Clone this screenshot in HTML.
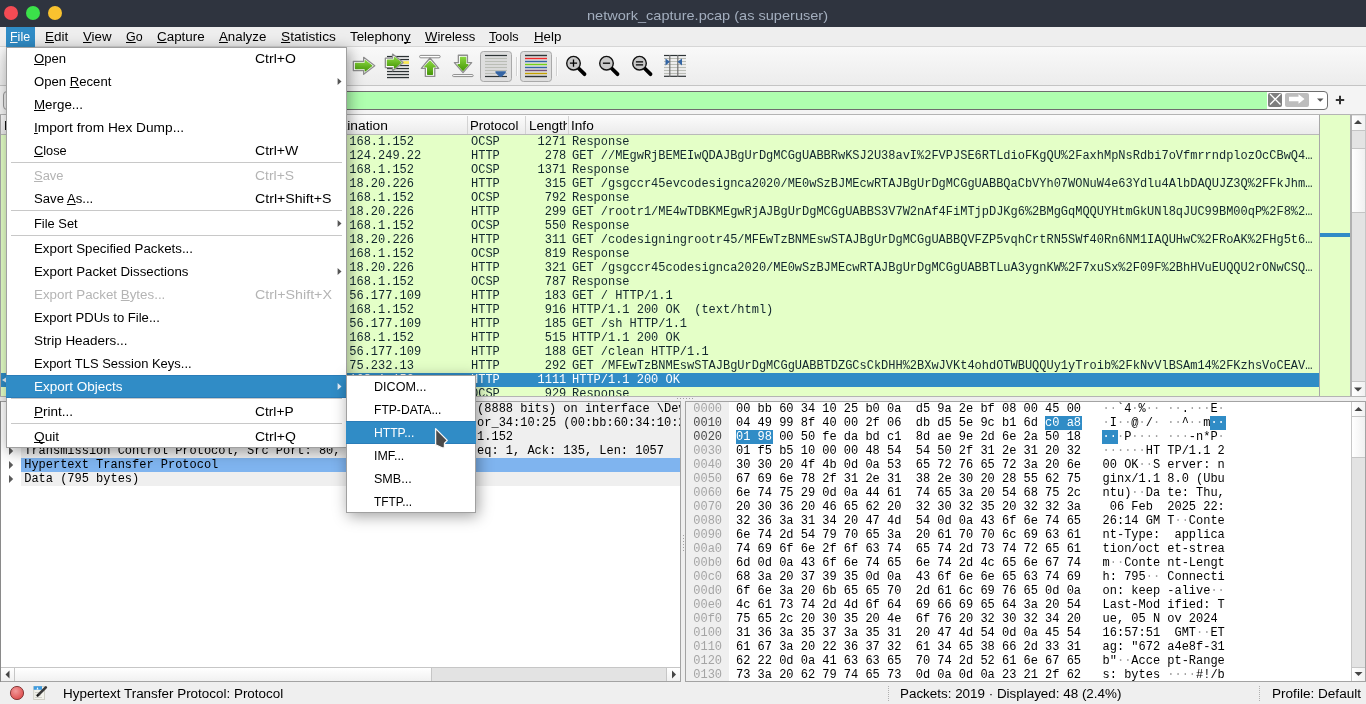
<!DOCTYPE html>
<html><head><meta charset="utf-8"><title>Wireshark</title><style>*{margin:0;padding:0}
body{width:1366px;height:704px;position:relative;overflow:hidden;background:#efefef}
div{position:absolute}
.t{font-family:"Liberation Sans",sans-serif;line-height:16px;white-space:pre;transform-origin:0 0}
.m{font-family:"Liberation Mono",monospace;font-size:12px;line-height:14px;white-space:pre;letter-spacing:-0.0125px}
u{text-decoration:underline;text-decoration-thickness:1px;text-underline-offset:1px;text-decoration-skip-ink:none}
</style></head><body><div id="root" style="left:0;top:0;width:1366px;height:704px;overflow:hidden;background:#efefef;will-change:transform">
<div style="left:0px;top:0px;width:1366px;height:27px;background:#2f343f"></div>
<div style="left:4px;top:6px;width:14px;height:14px;border-radius:50%;background:#f44b54"></div>
<div style="left:26px;top:6px;width:14px;height:14px;border-radius:50%;background:#3be14a"></div>
<div style="left:48px;top:6px;width:14px;height:14px;border-radius:50%;background:#f9c22f"></div>
<div class="t" style="left:586.5px;top:8px;font-size:13.5px;color:#a3aebe;transform:scaleX(1.0780);">network_capture.pcap (as superuser)</div>
<div style="left:0px;top:27px;width:1366px;height:19px;background:#eeeeee"></div>
<div style="left:0px;top:46px;width:1366px;height:1px;background:#d6d6d6"></div>
<div style="left:6px;top:27px;width:29px;height:20px;background:#308cc6"></div>
<div class="t" style="left:10px;top:29px;font-size:12.5px;color:#ffffff;transform:scaleX(0.9971);"><u>F</u>ile</div>
<div class="t" style="left:44.5px;top:29px;font-size:12.5px;color:#000000;transform:scaleX(1.0789);"><u>E</u>dit</div>
<div class="t" style="left:82.5px;top:29px;font-size:12.5px;color:#000000;transform:scaleX(1.0599);"><u>V</u>iew</div>
<div class="t" style="left:125.5px;top:29px;font-size:12.5px;color:#000000;transform:scaleX(0.9980);"><u>G</u>o</div>
<div class="t" style="left:156.5px;top:29px;font-size:12.5px;color:#000000;transform:scaleX(1.0730);"><u>C</u>apture</div>
<div class="t" style="left:218.5px;top:29px;font-size:12.5px;color:#000000;transform:scaleX(1.0633);"><u>A</u>nalyze</div>
<div class="t" style="left:280.5px;top:29px;font-size:12.5px;color:#000000;transform:scaleX(1.0968);"><u>S</u>tatistics</div>
<div class="t" style="left:350px;top:29px;font-size:12.5px;color:#000000;transform:scaleX(1.0645);">Telephon<u>y</u></div>
<div class="t" style="left:424.5px;top:29px;font-size:12.5px;color:#000000;transform:scaleX(1.0478);"><u>W</u>ireless</div>
<div class="t" style="left:489px;top:29px;font-size:12.5px;color:#000000;transform:scaleX(1.0131);"><u>T</u>ools</div>
<div class="t" style="left:533.5px;top:29px;font-size:12.5px;color:#000000;transform:scaleX(1.0642);"><u>H</u>elp</div>
<div style="left:0px;top:47px;width:1366px;height:38px;background:linear-gradient(#f9f9f9,#ececec)"></div>
<div style="left:0px;top:85px;width:1366px;height:1px;background:#c4c4c4"></div>
<svg style="position:absolute;left:0;top:0" width="1366" height="90" viewBox="0 0 1366 90"><defs><linearGradient id="gg" x1="0" y1="0" x2="0" y2="1"><stop offset="0" stop-color="#86d43c"/><stop offset="1" stop-color="#4a9a0c"/></linearGradient><linearGradient id="mg" x1="0" y1="0" x2="0" y2="1"><stop offset="0" stop-color="#e6e6e6"/><stop offset="1" stop-color="#a8a8a8"/></linearGradient></defs><polygon points="353.35,61.35 363.65,61.35 363.65,57.3 374.75,65.8 363.65,74.3 363.65,70.55 353.35,70.55" fill="#fdfdfd" stroke="#8e8e8e" stroke-width="1.3" stroke-linejoin="round"/><polygon points="355.6,63.4 365.3,63.4 365.3,60.82 371.69,65.8 365.3,70.78 365.3,68.5 355.6,68.5" fill="url(#gg)" stroke="url(#gg)" stroke-width="1.4" stroke-linejoin="round"/><rect x="387" y="55.9" width="22" height="1.3" fill="#2e3436"/><rect x="387" y="58.9" width="22" height="1.3" fill="#2e3436"/><rect x="387" y="61.9" width="22" height="1.3" fill="#2e3436"/><rect x="387" y="64.9" width="22" height="1.3" fill="#2e3436"/><rect x="387" y="67.9" width="22" height="1.3" fill="#2e3436"/><rect x="387" y="70.9" width="22" height="1.3" fill="#2e3436"/><rect x="387" y="73.9" width="22" height="1.3" fill="#2e3436"/><rect x="387" y="76.9" width="22" height="1.3" fill="#2e3436"/><rect x="403" y="61.2" width="6" height="2.6" fill="#fce94f"/><polygon points="385.35,58.15 392.55,58.15 392.55,54.11 403.06,62.5 392.55,70.69 392.55,67.55 385.35,67.55" fill="#fdfdfd" stroke="#8e8e8e" stroke-width="1.3" stroke-linejoin="round"/><polygon points="387.5,60.3 394.5,60.3 394.5,57.62 400.8,62.51 394.5,67.74 394.5,65.4 387.5,65.4" fill="url(#gg)" stroke="url(#gg)" stroke-width="1.4" stroke-linejoin="round"/><rect x="419.6" y="55.4" width="20.6" height="2.4" rx="1.2" fill="#fff" stroke="#8a8a8a" stroke-width="1"/><polygon points="430.0,58.03 438.68,68.35 434.75,68.35 434.75,76.45 425.35,76.45 425.35,68.35 421.32,68.35" fill="#fdfdfd" stroke="#8e8e8e" stroke-width="1.3" stroke-linejoin="round"/><polygon points="430.0,61.33 435.24,66.9 432.4,66.9 432.4,74.3 427.7,74.3 427.7,66.9 424.84,66.9" fill="url(#gg)" stroke="url(#gg)" stroke-width="1.4" stroke-linejoin="round"/><polygon points="458.35,55.25 467.45,55.25 467.45,62.65 471.67,62.65 463.0,72.67 454.33,62.65 458.35,62.65" fill="#fdfdfd" stroke="#8e8e8e" stroke-width="1.3" stroke-linejoin="round"/><polygon points="460.6,57.5 465.6,57.5 465.6,64.8 467.89,64.8 463.0,70.34 458.11,64.8 460.6,64.8" fill="url(#gg)" stroke="url(#gg)" stroke-width="1.4" stroke-linejoin="round"/><rect x="452.6" y="74.6" width="20.6" height="2.0" rx="1.0" fill="#fff" stroke="#8a8a8a" stroke-width="1"/><rect x="480.5" y="51.5" width="31" height="30" rx="3" fill="#dedede" stroke="#a9a9a9" stroke-width="1"/><rect x="485" y="54.9" width="22" height="1.2" fill="#2e3436"/><rect x="485" y="57.9" width="22" height="1.2" fill="#babdb6"/><rect x="485" y="60.9" width="22" height="1.2" fill="#babdb6"/><rect x="485" y="63.9" width="22" height="1.2" fill="#babdb6"/><rect x="485" y="66.9" width="22" height="1.2" fill="#babdb6"/><rect x="485" y="69.9" width="22" height="1.2" fill="#babdb6"/><rect x="485" y="72.9" width="22" height="1.2" fill="#babdb6"/><rect x="485" y="75.9" width="22" height="1.2" fill="#2e3436"/><path d="M495.5,71.2 L505.8,71.2 Q506.5,72 505,73.5 L501.8,76.8 L499.5,76.8 L496.2,73.5 Q494.8,72 495.5,71.2 Z" fill="#3465a4"/><rect x="516" y="57" width="1" height="19" fill="#d2d2d2"/><rect x="517" y="57" width="1" height="19" fill="#fbfbfb"/><rect x="520.5" y="51.5" width="31" height="30" rx="3" fill="#dedede" stroke="#a9a9a9" stroke-width="1"/><rect x="525" y="54.8" width="22" height="1.4" fill="#2e3436"/><rect x="525" y="57.8" width="22" height="1.4" fill="#ef2929"/><rect x="525" y="60.8" width="22" height="1.4" fill="#3465a4"/><rect x="525" y="63.8" width="22" height="1.4" fill="#73d216"/><rect x="525" y="66.8" width="22" height="1.4" fill="#3465a4"/><rect x="525" y="69.8" width="22" height="1.4" fill="#75507b"/><rect x="525" y="72.8" width="22" height="1.4" fill="#c4a000"/><rect x="525" y="75.8" width="22" height="1.4" fill="#2e3436"/><rect x="556" y="57" width="1" height="19" fill="#d2d2d2"/><rect x="557" y="57" width="1" height="19" fill="#fbfbfb"/><line x1="578.3" y1="68.0" x2="584.5" y2="74.2" stroke="#000" stroke-width="3.8" stroke-linecap="round"/><circle cx="573.5" cy="63.2" r="6.8" fill="#c8c8c8" stroke="#111" stroke-width="1.4"/><path d="M569.9,63.2 H577.1 M573.5,59.6 V66.8" stroke="#000" stroke-width="1.3"/><line x1="611.3" y1="68.0" x2="617.5" y2="74.2" stroke="#000" stroke-width="3.8" stroke-linecap="round"/><circle cx="606.5" cy="63.2" r="6.8" fill="#c8c8c8" stroke="#111" stroke-width="1.4"/><path d="M602.9,63.2 H610.1" stroke="#000" stroke-width="1.3"/><line x1="644.3" y1="68.0" x2="650.5" y2="74.2" stroke="#000" stroke-width="3.8" stroke-linecap="round"/><circle cx="639.5" cy="63.2" r="6.8" fill="#c8c8c8" stroke="#111" stroke-width="1.4"/><path d="M635.9,61.900000000000006 H643.1 M635.9,64.8 H643.1" stroke="#000" stroke-width="1.3"/><rect x="664" y="54.9" width="22" height="1.2" fill="#2e3436"/><rect x="664" y="57.9" width="22" height="1.2" fill="#babdb6"/><rect x="664" y="60.9" width="22" height="1.2" fill="#babdb6"/><rect x="664" y="63.9" width="22" height="1.2" fill="#babdb6"/><rect x="664" y="66.9" width="22" height="1.2" fill="#babdb6"/><rect x="664" y="69.9" width="22" height="1.2" fill="#babdb6"/><rect x="664" y="72.9" width="22" height="1.2" fill="#babdb6"/><rect x="664" y="75.7" width="22" height="1.2" fill="#2e3436"/><rect x="669.2" y="55" width="1.2" height="22" fill="#6f6f6f"/><rect x="677.2" y="55" width="1.2" height="22" fill="#6f6f6f"/><path d="M665.5,58.5 L670,61.8 L665.5,65.5 Z" fill="#3465a4"/><path d="M682,58.5 L677.5,61.8 L682,65.5 Z" fill="#3465a4"/></svg>
<div style="left:0px;top:86px;width:1366px;height:28px;background:#f4f4f4"></div>
<div style="left:3px;top:91px;width:20px;height:17px;border:1px solid #9a9a9a;border-radius:4px;background:#f0f0f0"></div>
<div style="left:40px;top:91px;width:1286px;height:17px;border:1px solid #6e6e6e;border-radius:4px;background:#fff;overflow:hidden"><div style="left:0;top:0;width:1226px;height:17px;background:#afffaf"></div><div style="left:1227px;top:1px;width:14px;height:14px;border-radius:2px;background:#7e7e7e"></div><div style="left:1244px;top:1px;width:24px;height:14px;border-radius:2px;background:#bdbdbd"></div></div>
<svg style="position:absolute;left:0;top:0" width="1366" height="114" viewBox="0 0 1366 114"><path d="M1270,94 L1280.5,104.5 M1280.5,94 L1270,104.5" stroke="#fff" stroke-width="1.3"/><path d="M1289,96.8 H1298.5 V94.2 L1304.5,99 L1298.5,103.8 V101.2 H1289 Z" fill="#fff"/><path d="M1317,98.5 H1323.5 L1320.25,101.8 Z" fill="#555"/><path d="M1335.8,100 H1344.2 M1340,95.8 V104.2" stroke="#333" stroke-width="2"/></svg>
<div style="left:0px;top:114px;width:1366px;height:1px;background:#b4b4b4"></div>
<div style="left:0px;top:115px;width:1319px;height:19px;background:linear-gradient(#fcfcfc,#ebebeb)"></div>
<div style="left:0px;top:134px;width:1319px;height:1px;background:#b9b9b9"></div>
<div style="left:60px;top:116px;width:1px;height:18px;background:#d3d3d3"></div>
<div style="left:170px;top:116px;width:1px;height:18px;background:#d3d3d3"></div>
<div style="left:320px;top:116px;width:1px;height:18px;background:#d3d3d3"></div>
<div style="left:467px;top:116px;width:1px;height:18px;background:#d3d3d3"></div>
<div style="left:525px;top:116px;width:1px;height:18px;background:#d3d3d3"></div>
<div style="left:568px;top:116px;width:1px;height:18px;background:#d3d3d3"></div>
<div class="t" style="left:3.5px;top:118px;font-size:12.5px;color:#000;transform:scaleX(1.0242);">No.</div>
<div class="t" style="left:318.5px;top:118px;font-size:12.5px;color:#000;transform:scaleX(1.1012);">Destination</div>
<div class="t" style="left:470.3px;top:118px;font-size:12.5px;color:#000;transform:scaleX(1.0546);">Protocol</div>
<div style="left:526px;top:115px;width:41px;height:19px;overflow:hidden">
<div class="t" style="left:3px;top:3px;font-size:12.5px;color:#000;transform:scaleX(1.0827);">Length</div>
</div>
<div class="t" style="left:570.6px;top:118px;font-size:12.5px;color:#000;transform:scaleX(1.0893);">Info</div>
<div style="left:0;top:135px;width:1319px;height:261px;overflow:hidden;background:#e4ffc7">
<div class="m" style="left:349.3px;top:0px;color:#12272e;">168.1.152</div>
<div class="m" style="left:471px;top:0px;color:#12272e;">OCSP</div>
<div class="m" style="left:537.5px;top:0px;color:#12272e;">1271</div>
<div class="m" style="left:572px;top:0px;color:#12272e;">Response</div>
<div class="m" style="left:349.3px;top:14px;color:#12272e;">124.249.22</div>
<div class="m" style="left:471px;top:14px;color:#12272e;">HTTP</div>
<div class="m" style="left:544.6999999999999px;top:14px;color:#12272e;">278</div>
<div class="m" style="left:572px;top:14px;color:#12272e;">GET //MEgwRjBEMEIwQDAJBgUrDgMCGgUABBRwKSJ2U38avI%2FVPJSE6RTLdioFKgQU%2FaxhMpNsRdbi7oVfmrrndplozOcCBwQ4…</div>
<div class="m" style="left:349.3px;top:28px;color:#12272e;">168.1.152</div>
<div class="m" style="left:471px;top:28px;color:#12272e;">OCSP</div>
<div class="m" style="left:537.5px;top:28px;color:#12272e;">1371</div>
<div class="m" style="left:572px;top:28px;color:#12272e;">Response</div>
<div class="m" style="left:349.3px;top:42px;color:#12272e;">18.20.226</div>
<div class="m" style="left:471px;top:42px;color:#12272e;">HTTP</div>
<div class="m" style="left:544.6999999999999px;top:42px;color:#12272e;">315</div>
<div class="m" style="left:572px;top:42px;color:#12272e;">GET /gsgccr45evcodesignca2020/ME0wSzBJMEcwRTAJBgUrDgMCGgUABBQaCbVYh07WONuW4e63Ydlu4AlbDAQUJZ3Q%2FFkJhm…</div>
<div class="m" style="left:349.3px;top:56px;color:#12272e;">168.1.152</div>
<div class="m" style="left:471px;top:56px;color:#12272e;">OCSP</div>
<div class="m" style="left:544.6999999999999px;top:56px;color:#12272e;">792</div>
<div class="m" style="left:572px;top:56px;color:#12272e;">Response</div>
<div class="m" style="left:349.3px;top:70px;color:#12272e;">18.20.226</div>
<div class="m" style="left:471px;top:70px;color:#12272e;">HTTP</div>
<div class="m" style="left:544.6999999999999px;top:70px;color:#12272e;">299</div>
<div class="m" style="left:572px;top:70px;color:#12272e;">GET /rootr1/ME4wTDBKMEgwRjAJBgUrDgMCGgUABBS3V7W2nAf4FiMTjpDJKg6%2BMgGqMQQUYHtmGkUNl8qJUC99BM00qP%2F8%2…</div>
<div class="m" style="left:349.3px;top:84px;color:#12272e;">168.1.152</div>
<div class="m" style="left:471px;top:84px;color:#12272e;">OCSP</div>
<div class="m" style="left:544.6999999999999px;top:84px;color:#12272e;">550</div>
<div class="m" style="left:572px;top:84px;color:#12272e;">Response</div>
<div class="m" style="left:349.3px;top:98px;color:#12272e;">18.20.226</div>
<div class="m" style="left:471px;top:98px;color:#12272e;">HTTP</div>
<div class="m" style="left:544.6999999999999px;top:98px;color:#12272e;">311</div>
<div class="m" style="left:572px;top:98px;color:#12272e;">GET /codesigningrootr45/MFEwTzBNMEswSTAJBgUrDgMCGgUABBQVFZP5vqhCrtRN5SWf40Rn6NM1IAQUHwC%2FRoAK%2FHg5t6…</div>
<div class="m" style="left:349.3px;top:112px;color:#12272e;">168.1.152</div>
<div class="m" style="left:471px;top:112px;color:#12272e;">OCSP</div>
<div class="m" style="left:544.6999999999999px;top:112px;color:#12272e;">819</div>
<div class="m" style="left:572px;top:112px;color:#12272e;">Response</div>
<div class="m" style="left:349.3px;top:126px;color:#12272e;">18.20.226</div>
<div class="m" style="left:471px;top:126px;color:#12272e;">HTTP</div>
<div class="m" style="left:544.6999999999999px;top:126px;color:#12272e;">321</div>
<div class="m" style="left:572px;top:126px;color:#12272e;">GET /gsgccr45codesignca2020/ME0wSzBJMEcwRTAJBgUrDgMCGgUABBTLuA3ygnKW%2F7xuSx%2F09F%2BhHVuEUQQU2rONwCSQ…</div>
<div class="m" style="left:349.3px;top:140px;color:#12272e;">168.1.152</div>
<div class="m" style="left:471px;top:140px;color:#12272e;">OCSP</div>
<div class="m" style="left:544.6999999999999px;top:140px;color:#12272e;">787</div>
<div class="m" style="left:572px;top:140px;color:#12272e;">Response</div>
<div class="m" style="left:342.1px;top:154px;color:#12272e;">.56.177.109</div>
<div class="m" style="left:471px;top:154px;color:#12272e;">HTTP</div>
<div class="m" style="left:544.6999999999999px;top:154px;color:#12272e;">183</div>
<div class="m" style="left:572px;top:154px;color:#12272e;">GET / HTTP/1.1</div>
<div class="m" style="left:349.3px;top:168px;color:#12272e;">168.1.152</div>
<div class="m" style="left:471px;top:168px;color:#12272e;">HTTP</div>
<div class="m" style="left:544.6999999999999px;top:168px;color:#12272e;">916</div>
<div class="m" style="left:572px;top:168px;color:#12272e;">HTTP/1.1 200 OK  (text/html)</div>
<div class="m" style="left:342.1px;top:182px;color:#12272e;">.56.177.109</div>
<div class="m" style="left:471px;top:182px;color:#12272e;">HTTP</div>
<div class="m" style="left:544.6999999999999px;top:182px;color:#12272e;">185</div>
<div class="m" style="left:572px;top:182px;color:#12272e;">GET /sh HTTP/1.1</div>
<div class="m" style="left:349.3px;top:196px;color:#12272e;">168.1.152</div>
<div class="m" style="left:471px;top:196px;color:#12272e;">HTTP</div>
<div class="m" style="left:544.6999999999999px;top:196px;color:#12272e;">515</div>
<div class="m" style="left:572px;top:196px;color:#12272e;">HTTP/1.1 200 OK</div>
<div class="m" style="left:342.1px;top:210px;color:#12272e;">.56.177.109</div>
<div class="m" style="left:471px;top:210px;color:#12272e;">HTTP</div>
<div class="m" style="left:544.6999999999999px;top:210px;color:#12272e;">188</div>
<div class="m" style="left:572px;top:210px;color:#12272e;">GET /clean HTTP/1.1</div>
<div class="m" style="left:349.3px;top:224px;color:#12272e;">75.232.13</div>
<div class="m" style="left:471px;top:224px;color:#12272e;">HTTP</div>
<div class="m" style="left:544.6999999999999px;top:224px;color:#12272e;">292</div>
<div class="m" style="left:572px;top:224px;color:#12272e;">GET /MFEwTzBNMEswSTAJBgUrDgMCGgUABBTDZGCsCkDHH%2BXwJVKt4ohdOTWBUQQUy1yTroib%2FkNvVlBSAm14%2FKzhsVoCEAV…</div>
<div style="left:0px;top:238px;width:1319px;height:14px;background:#308cc6"></div>
<div class="m" style="left:349.3px;top:238px;color:#ffffff;">168.1.152</div>
<div class="m" style="left:471px;top:238px;color:#ffffff;">HTTP</div>
<div class="m" style="left:537.5px;top:238px;color:#ffffff;">1111</div>
<div class="m" style="left:572px;top:238px;color:#ffffff;">HTTP/1.1 200 OK</div>
<div class="m" style="left:349.3px;top:252px;color:#12272e;">168.1.152</div>
<div class="m" style="left:471px;top:252px;color:#12272e;">OCSP</div>
<div class="m" style="left:544.6999999999999px;top:252px;color:#12272e;">929</div>
<div class="m" style="left:572px;top:252px;color:#12272e;">Response</div>
</div>
<div style="left:0px;top:396px;width:1366px;height:1px;background:#b4b4b4"></div>
<div style="left:0px;top:115px;width:1px;height:281px;background:#a8a8a8"></div>
<svg style="position:absolute;left:0;top:0" width="20" height="400" viewBox="0 0 20 400"><path d="M2,380 L6,377.5 L6,382.5 Z" fill="#e8f0f8"/></svg>
<div style="left:1319px;top:115px;width:1px;height:281px;background:#a8a8a8"></div>
<div style="left:1320px;top:115px;width:30px;height:281px;background:#e4ffc7"></div>
<div style="left:1320px;top:233px;width:30px;height:4px;background:#308cc6"></div>
<div style="left:1350px;top:115px;width:2px;height:281px;background:#b0b0b0"></div>
<div style="left:1352px;top:115px;width:13px;height:281px;background:#e3e3e3"></div>
<div style="left:1365px;top:115px;width:1px;height:281px;background:#c6c6c6"></div>
<div style="left:1352px;top:116px;width:13px;height:14px;background:linear-gradient(90deg,#ffffff,#f1f1f1)"></div>
<div style="left:1352px;top:130px;width:13px;height:1px;background:#c4c4c4"></div>
<div style="left:1352px;top:148px;width:13px;height:1px;background:#c4c4c4"></div>
<div style="left:1352px;top:149px;width:13px;height:63px;background:linear-gradient(90deg,#ffffff,#f0f0f0)"></div>
<div style="left:1352px;top:212px;width:13px;height:1px;background:#c4c4c4"></div>
<div style="left:1352px;top:381px;width:13px;height:1px;background:#c4c4c4"></div>
<div style="left:1352px;top:382px;width:13px;height:14px;background:linear-gradient(90deg,#ffffff,#f1f1f1)"></div>
<svg style="position:absolute;left:0;top:0" width="1366" height="400" viewBox="0 0 1366 400"><path d="M1354,124 L1362,124 L1358,120 Z" fill="#444"/><path d="M1354,387.5 L1362,387.5 L1358,391.5 Z" fill="#444"/></svg>
<div style="left:0px;top:397px;width:1366px;height:4px;background:#efefef"></div>
<div style="left:677px;top:398px;width:1px;height:1px;background:#a0a0a0"></div>
<div style="left:680px;top:398px;width:1px;height:1px;background:#a0a0a0"></div>
<div style="left:683px;top:398px;width:1px;height:1px;background:#a0a0a0"></div>
<div style="left:686px;top:398px;width:1px;height:1px;background:#a0a0a0"></div>
<div style="left:689px;top:398px;width:1px;height:1px;background:#a0a0a0"></div>
<div style="left:692px;top:398px;width:1px;height:1px;background:#a0a0a0"></div>
<div style="left:683px;top:535px;width:1px;height:1px;background:#a0a0a0"></div>
<div style="left:683px;top:538px;width:1px;height:1px;background:#a0a0a0"></div>
<div style="left:683px;top:541px;width:1px;height:1px;background:#a0a0a0"></div>
<div style="left:683px;top:544px;width:1px;height:1px;background:#a0a0a0"></div>
<div style="left:683px;top:547px;width:1px;height:1px;background:#a0a0a0"></div>
<div style="left:683px;top:550px;width:1px;height:1px;background:#a0a0a0"></div>
<div style="left:0px;top:401px;width:681px;height:281px;background:#ffffff;border:1px solid #a3a3a3;box-sizing:border-box"></div>
<div style="left:0px;top:401px;width:1px;height:281px;background:#8a8a8a"></div>
<div style="left:1px;top:402px;width:679px;height:265px;overflow:hidden">
<div style="left:20px;top:0px;width:659px;height:14px;background:#efefef"></div>
<div class="m" style="left:23.2px;top:0px;color:#000000;">Frame 85: 1111 bytes on wire (8888 bits), 1111 bytes captured  (8888 bits) on interface \Device\NPF_{6F1B2C}, id 0</div>
<div style="left:20px;top:14px;width:659px;height:14px;background:#efefef"></div>
<div class="m" style="left:23.2px;top:14px;color:#000000;">Ethernet II, Src: Intel_9a:2e:bf (b0:0a:d5:9a:2e:bf), Dst: Ven or_34:10:25 (00:bb:60:34:10:25)</div>
<div style="left:20px;top:28px;width:659px;height:14px;background:#efefef"></div>
<div class="m" style="left:23.2px;top:28px;color:#000000;">Internet Protocol Version 4, Src: 23.56.177.109, Dst: 192.168. 1.152</div>
<div style="left:20px;top:42px;width:659px;height:14px;background:#efefef"></div>
<div class="m" style="left:23.2px;top:42px;color:#000000;">Transmission Control Protocol, Src Port: 80, Dst Port: 49715,  eq: 1, Ack: 135, Len: 1057</div>
<div style="left:20px;top:56px;width:659px;height:14px;background:#7fb4ef"></div>
<div class="m" style="left:23.2px;top:56px;color:#000000;">Hypertext Transfer Protocol</div>
<div style="left:20px;top:70px;width:659px;height:14px;background:#efefef"></div>
<div class="m" style="left:23.2px;top:70px;color:#000000;">Data (795 bytes)</div>
</div>
<svg style="position:absolute;left:0;top:0" width="1366" height="704" viewBox="0 0 1366 704"><path d="M9,405 L13.2,409 L9,413 Z" fill="#5a5a5a"/><path d="M9,419 L13.2,423 L9,427 Z" fill="#5a5a5a"/><path d="M9,433 L13.2,437 L9,441 Z" fill="#5a5a5a"/><path d="M9,447 L13.2,451 L9,455 Z" fill="#5a5a5a"/><path d="M9,461 L13.2,465 L9,469 Z" fill="#5a5a5a"/><path d="M9,475 L13.2,479 L9,483 Z" fill="#5a5a5a"/></svg>
<div style="left:1px;top:667px;width:679px;height:1px;background:#c6c6c6"></div>
<div style="left:1px;top:668px;width:679px;height:13px;background:#e3e3e3"></div>
<div style="left:1px;top:668px;width:13px;height:13px;background:linear-gradient(#ffffff,#f0f0f0)"></div>
<div style="left:14px;top:668px;width:1px;height:13px;background:#c6c6c6"></div>
<div style="left:15px;top:668px;width:416px;height:13px;background:linear-gradient(#ffffff,#f1f1f1)"></div>
<div style="left:431px;top:668px;width:1px;height:13px;background:#c6c6c6"></div>
<div style="left:666px;top:668px;width:1px;height:13px;background:#c6c6c6"></div>
<div style="left:667px;top:668px;width:13px;height:13px;background:linear-gradient(#ffffff,#f0f0f0)"></div>
<svg style="position:absolute;left:0;top:0" width="1366" height="704" viewBox="0 0 1366 704"><path d="M9.5,670.5 L9.5,678.5 L5.5,674.5 Z" fill="#444"/><path d="M672,670.5 L672,678.5 L676,674.5 Z" fill="#444"/></svg>
<div style="left:685px;top:401px;width:681px;height:281px;background:#ffffff;border:1px solid #a3a3a3;box-sizing:border-box"></div>
<div style="left:686px;top:402px;width:43px;height:279px;background:#efefef"></div>
<div style="left:686px;top:402px;width:665px;height:279px;overflow:hidden">
<div class="m" style="left:7.2999999999999545px;top:0px;color:#a5a5a5;">0000</div>
<div class="m" style="left:50.0px;top:0px;color:#000;">00 bb 60 34 10 25 b0 0a  d5 9a 2e bf 08 00 45 00</div>
<div class="m" style="left:416.5625px;top:0px;color:#a0a0a0;">·</div>
<div class="m" style="left:423.75px;top:0px;color:#a0a0a0;">·</div>
<div class="m" style="left:430.9375px;top:0px;color:#000;">`</div>
<div class="m" style="left:438.125px;top:0px;color:#000;">4</div>
<div class="m" style="left:445.3125px;top:0px;color:#a0a0a0;">·</div>
<div class="m" style="left:452.5px;top:0px;color:#000;">%</div>
<div class="m" style="left:459.6875px;top:0px;color:#a0a0a0;">·</div>
<div class="m" style="left:466.875px;top:0px;color:#a0a0a0;">·</div>
<div class="m" style="left:481.25px;top:0px;color:#a0a0a0;">·</div>
<div class="m" style="left:488.4375px;top:0px;color:#a0a0a0;">·</div>
<div class="m" style="left:495.625px;top:0px;color:#000;">.</div>
<div class="m" style="left:502.8125px;top:0px;color:#a0a0a0;">·</div>
<div class="m" style="left:510.0px;top:0px;color:#a0a0a0;">·</div>
<div class="m" style="left:517.1875px;top:0px;color:#a0a0a0;">·</div>
<div class="m" style="left:524.375px;top:0px;color:#000;">E</div>
<div class="m" style="left:531.5625px;top:0px;color:#a0a0a0;">·</div>
<div style="left:359.0625px;top:14px;width:37px;height:14px;background:#308cc6"></div>
<div style="left:524px;top:14px;width:16px;height:14px;background:#308cc6"></div>
<div class="m" style="left:7.2999999999999545px;top:14px;color:#4a4a4a;">0010</div>
<div class="m" style="left:50.0px;top:14px;color:#000;">04 49 99 8f 40 00 2f 06  db d5 5e 9c b1 6d </div>
<div class="m" style="left:359.0625px;top:14px;color:#fff;">c0 a8</div>
<div class="m" style="left:416.5625px;top:14px;color:#a0a0a0;">·</div>
<div class="m" style="left:423.75px;top:14px;color:#000;">I</div>
<div class="m" style="left:430.9375px;top:14px;color:#a0a0a0;">·</div>
<div class="m" style="left:438.125px;top:14px;color:#a0a0a0;">·</div>
<div class="m" style="left:445.3125px;top:14px;color:#000;">@</div>
<div class="m" style="left:452.5px;top:14px;color:#a0a0a0;">·</div>
<div class="m" style="left:459.6875px;top:14px;color:#000;">/</div>
<div class="m" style="left:466.875px;top:14px;color:#a0a0a0;">·</div>
<div class="m" style="left:481.25px;top:14px;color:#a0a0a0;">·</div>
<div class="m" style="left:488.4375px;top:14px;color:#a0a0a0;">·</div>
<div class="m" style="left:495.625px;top:14px;color:#000;">^</div>
<div class="m" style="left:502.8125px;top:14px;color:#a0a0a0;">·</div>
<div class="m" style="left:510.0px;top:14px;color:#a0a0a0;">·</div>
<div class="m" style="left:517.1875px;top:14px;color:#000;">m</div>
<div class="m" style="left:524.375px;top:14px;color:#fff;">·</div>
<div class="m" style="left:531.5625px;top:14px;color:#fff;">·</div>
<div style="left:50.0px;top:28px;width:37px;height:14px;background:#308cc6"></div>
<div style="left:416px;top:28px;width:16px;height:14px;background:#308cc6"></div>
<div class="m" style="left:7.2999999999999545px;top:28px;color:#4a4a4a;">0020</div>
<div class="m" style="left:50.0px;top:28px;color:#fff;">01 98</div>
<div class="m" style="left:85.9375px;top:28px;color:#000;"> 00 50 fe da bd c1  8d ae 9e 2d 6e 2a 50 18</div>
<div class="m" style="left:416.5625px;top:28px;color:#fff;">·</div>
<div class="m" style="left:423.75px;top:28px;color:#fff;">·</div>
<div class="m" style="left:430.9375px;top:28px;color:#a0a0a0;">·</div>
<div class="m" style="left:438.125px;top:28px;color:#000;">P</div>
<div class="m" style="left:445.3125px;top:28px;color:#a0a0a0;">·</div>
<div class="m" style="left:452.5px;top:28px;color:#a0a0a0;">·</div>
<div class="m" style="left:459.6875px;top:28px;color:#a0a0a0;">·</div>
<div class="m" style="left:466.875px;top:28px;color:#a0a0a0;">·</div>
<div class="m" style="left:481.25px;top:28px;color:#a0a0a0;">·</div>
<div class="m" style="left:488.4375px;top:28px;color:#a0a0a0;">·</div>
<div class="m" style="left:495.625px;top:28px;color:#a0a0a0;">·</div>
<div class="m" style="left:502.8125px;top:28px;color:#000;">-</div>
<div class="m" style="left:510.0px;top:28px;color:#000;">n</div>
<div class="m" style="left:517.1875px;top:28px;color:#000;">*</div>
<div class="m" style="left:524.375px;top:28px;color:#000;">P</div>
<div class="m" style="left:531.5625px;top:28px;color:#a0a0a0;">·</div>
<div class="m" style="left:7.2999999999999545px;top:42px;color:#a5a5a5;">0030</div>
<div class="m" style="left:50.0px;top:42px;color:#000;">01 f5 b5 10 00 00 48 54  54 50 2f 31 2e 31 20 32</div>
<div class="m" style="left:416.5625px;top:42px;color:#a0a0a0;">·</div>
<div class="m" style="left:423.75px;top:42px;color:#a0a0a0;">·</div>
<div class="m" style="left:430.9375px;top:42px;color:#a0a0a0;">·</div>
<div class="m" style="left:438.125px;top:42px;color:#a0a0a0;">·</div>
<div class="m" style="left:445.3125px;top:42px;color:#a0a0a0;">·</div>
<div class="m" style="left:452.5px;top:42px;color:#a0a0a0;">·</div>
<div class="m" style="left:459.6875px;top:42px;color:#000;">H</div>
<div class="m" style="left:466.875px;top:42px;color:#000;">T</div>
<div class="m" style="left:481.25px;top:42px;color:#000;">T</div>
<div class="m" style="left:488.4375px;top:42px;color:#000;">P</div>
<div class="m" style="left:495.625px;top:42px;color:#000;">/</div>
<div class="m" style="left:502.8125px;top:42px;color:#000;">1</div>
<div class="m" style="left:510.0px;top:42px;color:#000;">.</div>
<div class="m" style="left:517.1875px;top:42px;color:#000;">1</div>
<div class="m" style="left:531.5625px;top:42px;color:#000;">2</div>
<div class="m" style="left:7.2999999999999545px;top:56px;color:#a5a5a5;">0040</div>
<div class="m" style="left:50.0px;top:56px;color:#000;">30 30 20 4f 4b 0d 0a 53  65 72 76 65 72 3a 20 6e</div>
<div class="m" style="left:416.5625px;top:56px;color:#000;">0</div>
<div class="m" style="left:423.75px;top:56px;color:#000;">0</div>
<div class="m" style="left:438.125px;top:56px;color:#000;">O</div>
<div class="m" style="left:445.3125px;top:56px;color:#000;">K</div>
<div class="m" style="left:452.5px;top:56px;color:#a0a0a0;">·</div>
<div class="m" style="left:459.6875px;top:56px;color:#a0a0a0;">·</div>
<div class="m" style="left:466.875px;top:56px;color:#000;">S</div>
<div class="m" style="left:481.25px;top:56px;color:#000;">e</div>
<div class="m" style="left:488.4375px;top:56px;color:#000;">r</div>
<div class="m" style="left:495.625px;top:56px;color:#000;">v</div>
<div class="m" style="left:502.8125px;top:56px;color:#000;">e</div>
<div class="m" style="left:510.0px;top:56px;color:#000;">r</div>
<div class="m" style="left:517.1875px;top:56px;color:#000;">:</div>
<div class="m" style="left:531.5625px;top:56px;color:#000;">n</div>
<div class="m" style="left:7.2999999999999545px;top:70px;color:#a5a5a5;">0050</div>
<div class="m" style="left:50.0px;top:70px;color:#000;">67 69 6e 78 2f 31 2e 31  38 2e 30 20 28 55 62 75</div>
<div class="m" style="left:416.5625px;top:70px;color:#000;">g</div>
<div class="m" style="left:423.75px;top:70px;color:#000;">i</div>
<div class="m" style="left:430.9375px;top:70px;color:#000;">n</div>
<div class="m" style="left:438.125px;top:70px;color:#000;">x</div>
<div class="m" style="left:445.3125px;top:70px;color:#000;">/</div>
<div class="m" style="left:452.5px;top:70px;color:#000;">1</div>
<div class="m" style="left:459.6875px;top:70px;color:#000;">.</div>
<div class="m" style="left:466.875px;top:70px;color:#000;">1</div>
<div class="m" style="left:481.25px;top:70px;color:#000;">8</div>
<div class="m" style="left:488.4375px;top:70px;color:#000;">.</div>
<div class="m" style="left:495.625px;top:70px;color:#000;">0</div>
<div class="m" style="left:510.0px;top:70px;color:#000;">(</div>
<div class="m" style="left:517.1875px;top:70px;color:#000;">U</div>
<div class="m" style="left:524.375px;top:70px;color:#000;">b</div>
<div class="m" style="left:531.5625px;top:70px;color:#000;">u</div>
<div class="m" style="left:7.2999999999999545px;top:84px;color:#a5a5a5;">0060</div>
<div class="m" style="left:50.0px;top:84px;color:#000;">6e 74 75 29 0d 0a 44 61  74 65 3a 20 54 68 75 2c</div>
<div class="m" style="left:416.5625px;top:84px;color:#000;">n</div>
<div class="m" style="left:423.75px;top:84px;color:#000;">t</div>
<div class="m" style="left:430.9375px;top:84px;color:#000;">u</div>
<div class="m" style="left:438.125px;top:84px;color:#000;">)</div>
<div class="m" style="left:445.3125px;top:84px;color:#a0a0a0;">·</div>
<div class="m" style="left:452.5px;top:84px;color:#a0a0a0;">·</div>
<div class="m" style="left:459.6875px;top:84px;color:#000;">D</div>
<div class="m" style="left:466.875px;top:84px;color:#000;">a</div>
<div class="m" style="left:481.25px;top:84px;color:#000;">t</div>
<div class="m" style="left:488.4375px;top:84px;color:#000;">e</div>
<div class="m" style="left:495.625px;top:84px;color:#000;">:</div>
<div class="m" style="left:510.0px;top:84px;color:#000;">T</div>
<div class="m" style="left:517.1875px;top:84px;color:#000;">h</div>
<div class="m" style="left:524.375px;top:84px;color:#000;">u</div>
<div class="m" style="left:531.5625px;top:84px;color:#000;">,</div>
<div class="m" style="left:7.2999999999999545px;top:98px;color:#a5a5a5;">0070</div>
<div class="m" style="left:50.0px;top:98px;color:#000;">20 30 36 20 46 65 62 20  32 30 32 35 20 32 32 3a</div>
<div class="m" style="left:423.75px;top:98px;color:#000;">0</div>
<div class="m" style="left:430.9375px;top:98px;color:#000;">6</div>
<div class="m" style="left:445.3125px;top:98px;color:#000;">F</div>
<div class="m" style="left:452.5px;top:98px;color:#000;">e</div>
<div class="m" style="left:459.6875px;top:98px;color:#000;">b</div>
<div class="m" style="left:481.25px;top:98px;color:#000;">2</div>
<div class="m" style="left:488.4375px;top:98px;color:#000;">0</div>
<div class="m" style="left:495.625px;top:98px;color:#000;">2</div>
<div class="m" style="left:502.8125px;top:98px;color:#000;">5</div>
<div class="m" style="left:517.1875px;top:98px;color:#000;">2</div>
<div class="m" style="left:524.375px;top:98px;color:#000;">2</div>
<div class="m" style="left:531.5625px;top:98px;color:#000;">:</div>
<div class="m" style="left:7.2999999999999545px;top:112px;color:#a5a5a5;">0080</div>
<div class="m" style="left:50.0px;top:112px;color:#000;">32 36 3a 31 34 20 47 4d  54 0d 0a 43 6f 6e 74 65</div>
<div class="m" style="left:416.5625px;top:112px;color:#000;">2</div>
<div class="m" style="left:423.75px;top:112px;color:#000;">6</div>
<div class="m" style="left:430.9375px;top:112px;color:#000;">:</div>
<div class="m" style="left:438.125px;top:112px;color:#000;">1</div>
<div class="m" style="left:445.3125px;top:112px;color:#000;">4</div>
<div class="m" style="left:459.6875px;top:112px;color:#000;">G</div>
<div class="m" style="left:466.875px;top:112px;color:#000;">M</div>
<div class="m" style="left:481.25px;top:112px;color:#000;">T</div>
<div class="m" style="left:488.4375px;top:112px;color:#a0a0a0;">·</div>
<div class="m" style="left:495.625px;top:112px;color:#a0a0a0;">·</div>
<div class="m" style="left:502.8125px;top:112px;color:#000;">C</div>
<div class="m" style="left:510.0px;top:112px;color:#000;">o</div>
<div class="m" style="left:517.1875px;top:112px;color:#000;">n</div>
<div class="m" style="left:524.375px;top:112px;color:#000;">t</div>
<div class="m" style="left:531.5625px;top:112px;color:#000;">e</div>
<div class="m" style="left:7.2999999999999545px;top:126px;color:#a5a5a5;">0090</div>
<div class="m" style="left:50.0px;top:126px;color:#000;">6e 74 2d 54 79 70 65 3a  20 61 70 70 6c 69 63 61</div>
<div class="m" style="left:416.5625px;top:126px;color:#000;">n</div>
<div class="m" style="left:423.75px;top:126px;color:#000;">t</div>
<div class="m" style="left:430.9375px;top:126px;color:#000;">-</div>
<div class="m" style="left:438.125px;top:126px;color:#000;">T</div>
<div class="m" style="left:445.3125px;top:126px;color:#000;">y</div>
<div class="m" style="left:452.5px;top:126px;color:#000;">p</div>
<div class="m" style="left:459.6875px;top:126px;color:#000;">e</div>
<div class="m" style="left:466.875px;top:126px;color:#000;">:</div>
<div class="m" style="left:488.4375px;top:126px;color:#000;">a</div>
<div class="m" style="left:495.625px;top:126px;color:#000;">p</div>
<div class="m" style="left:502.8125px;top:126px;color:#000;">p</div>
<div class="m" style="left:510.0px;top:126px;color:#000;">l</div>
<div class="m" style="left:517.1875px;top:126px;color:#000;">i</div>
<div class="m" style="left:524.375px;top:126px;color:#000;">c</div>
<div class="m" style="left:531.5625px;top:126px;color:#000;">a</div>
<div class="m" style="left:7.2999999999999545px;top:140px;color:#a5a5a5;">00a0</div>
<div class="m" style="left:50.0px;top:140px;color:#000;">74 69 6f 6e 2f 6f 63 74  65 74 2d 73 74 72 65 61</div>
<div class="m" style="left:416.5625px;top:140px;color:#000;">t</div>
<div class="m" style="left:423.75px;top:140px;color:#000;">i</div>
<div class="m" style="left:430.9375px;top:140px;color:#000;">o</div>
<div class="m" style="left:438.125px;top:140px;color:#000;">n</div>
<div class="m" style="left:445.3125px;top:140px;color:#000;">/</div>
<div class="m" style="left:452.5px;top:140px;color:#000;">o</div>
<div class="m" style="left:459.6875px;top:140px;color:#000;">c</div>
<div class="m" style="left:466.875px;top:140px;color:#000;">t</div>
<div class="m" style="left:481.25px;top:140px;color:#000;">e</div>
<div class="m" style="left:488.4375px;top:140px;color:#000;">t</div>
<div class="m" style="left:495.625px;top:140px;color:#000;">-</div>
<div class="m" style="left:502.8125px;top:140px;color:#000;">s</div>
<div class="m" style="left:510.0px;top:140px;color:#000;">t</div>
<div class="m" style="left:517.1875px;top:140px;color:#000;">r</div>
<div class="m" style="left:524.375px;top:140px;color:#000;">e</div>
<div class="m" style="left:531.5625px;top:140px;color:#000;">a</div>
<div class="m" style="left:7.2999999999999545px;top:154px;color:#a5a5a5;">00b0</div>
<div class="m" style="left:50.0px;top:154px;color:#000;">6d 0d 0a 43 6f 6e 74 65  6e 74 2d 4c 65 6e 67 74</div>
<div class="m" style="left:416.5625px;top:154px;color:#000;">m</div>
<div class="m" style="left:423.75px;top:154px;color:#a0a0a0;">·</div>
<div class="m" style="left:430.9375px;top:154px;color:#a0a0a0;">·</div>
<div class="m" style="left:438.125px;top:154px;color:#000;">C</div>
<div class="m" style="left:445.3125px;top:154px;color:#000;">o</div>
<div class="m" style="left:452.5px;top:154px;color:#000;">n</div>
<div class="m" style="left:459.6875px;top:154px;color:#000;">t</div>
<div class="m" style="left:466.875px;top:154px;color:#000;">e</div>
<div class="m" style="left:481.25px;top:154px;color:#000;">n</div>
<div class="m" style="left:488.4375px;top:154px;color:#000;">t</div>
<div class="m" style="left:495.625px;top:154px;color:#000;">-</div>
<div class="m" style="left:502.8125px;top:154px;color:#000;">L</div>
<div class="m" style="left:510.0px;top:154px;color:#000;">e</div>
<div class="m" style="left:517.1875px;top:154px;color:#000;">n</div>
<div class="m" style="left:524.375px;top:154px;color:#000;">g</div>
<div class="m" style="left:531.5625px;top:154px;color:#000;">t</div>
<div class="m" style="left:7.2999999999999545px;top:168px;color:#a5a5a5;">00c0</div>
<div class="m" style="left:50.0px;top:168px;color:#000;">68 3a 20 37 39 35 0d 0a  43 6f 6e 6e 65 63 74 69</div>
<div class="m" style="left:416.5625px;top:168px;color:#000;">h</div>
<div class="m" style="left:423.75px;top:168px;color:#000;">:</div>
<div class="m" style="left:438.125px;top:168px;color:#000;">7</div>
<div class="m" style="left:445.3125px;top:168px;color:#000;">9</div>
<div class="m" style="left:452.5px;top:168px;color:#000;">5</div>
<div class="m" style="left:459.6875px;top:168px;color:#a0a0a0;">·</div>
<div class="m" style="left:466.875px;top:168px;color:#a0a0a0;">·</div>
<div class="m" style="left:481.25px;top:168px;color:#000;">C</div>
<div class="m" style="left:488.4375px;top:168px;color:#000;">o</div>
<div class="m" style="left:495.625px;top:168px;color:#000;">n</div>
<div class="m" style="left:502.8125px;top:168px;color:#000;">n</div>
<div class="m" style="left:510.0px;top:168px;color:#000;">e</div>
<div class="m" style="left:517.1875px;top:168px;color:#000;">c</div>
<div class="m" style="left:524.375px;top:168px;color:#000;">t</div>
<div class="m" style="left:531.5625px;top:168px;color:#000;">i</div>
<div class="m" style="left:7.2999999999999545px;top:182px;color:#a5a5a5;">00d0</div>
<div class="m" style="left:50.0px;top:182px;color:#000;">6f 6e 3a 20 6b 65 65 70  2d 61 6c 69 76 65 0d 0a</div>
<div class="m" style="left:416.5625px;top:182px;color:#000;">o</div>
<div class="m" style="left:423.75px;top:182px;color:#000;">n</div>
<div class="m" style="left:430.9375px;top:182px;color:#000;">:</div>
<div class="m" style="left:445.3125px;top:182px;color:#000;">k</div>
<div class="m" style="left:452.5px;top:182px;color:#000;">e</div>
<div class="m" style="left:459.6875px;top:182px;color:#000;">e</div>
<div class="m" style="left:466.875px;top:182px;color:#000;">p</div>
<div class="m" style="left:481.25px;top:182px;color:#000;">-</div>
<div class="m" style="left:488.4375px;top:182px;color:#000;">a</div>
<div class="m" style="left:495.625px;top:182px;color:#000;">l</div>
<div class="m" style="left:502.8125px;top:182px;color:#000;">i</div>
<div class="m" style="left:510.0px;top:182px;color:#000;">v</div>
<div class="m" style="left:517.1875px;top:182px;color:#000;">e</div>
<div class="m" style="left:524.375px;top:182px;color:#a0a0a0;">·</div>
<div class="m" style="left:531.5625px;top:182px;color:#a0a0a0;">·</div>
<div class="m" style="left:7.2999999999999545px;top:196px;color:#a5a5a5;">00e0</div>
<div class="m" style="left:50.0px;top:196px;color:#000;">4c 61 73 74 2d 4d 6f 64  69 66 69 65 64 3a 20 54</div>
<div class="m" style="left:416.5625px;top:196px;color:#000;">L</div>
<div class="m" style="left:423.75px;top:196px;color:#000;">a</div>
<div class="m" style="left:430.9375px;top:196px;color:#000;">s</div>
<div class="m" style="left:438.125px;top:196px;color:#000;">t</div>
<div class="m" style="left:445.3125px;top:196px;color:#000;">-</div>
<div class="m" style="left:452.5px;top:196px;color:#000;">M</div>
<div class="m" style="left:459.6875px;top:196px;color:#000;">o</div>
<div class="m" style="left:466.875px;top:196px;color:#000;">d</div>
<div class="m" style="left:481.25px;top:196px;color:#000;">i</div>
<div class="m" style="left:488.4375px;top:196px;color:#000;">f</div>
<div class="m" style="left:495.625px;top:196px;color:#000;">i</div>
<div class="m" style="left:502.8125px;top:196px;color:#000;">e</div>
<div class="m" style="left:510.0px;top:196px;color:#000;">d</div>
<div class="m" style="left:517.1875px;top:196px;color:#000;">:</div>
<div class="m" style="left:531.5625px;top:196px;color:#000;">T</div>
<div class="m" style="left:7.2999999999999545px;top:210px;color:#a5a5a5;">00f0</div>
<div class="m" style="left:50.0px;top:210px;color:#000;">75 65 2c 20 30 35 20 4e  6f 76 20 32 30 32 34 20</div>
<div class="m" style="left:416.5625px;top:210px;color:#000;">u</div>
<div class="m" style="left:423.75px;top:210px;color:#000;">e</div>
<div class="m" style="left:430.9375px;top:210px;color:#000;">,</div>
<div class="m" style="left:445.3125px;top:210px;color:#000;">0</div>
<div class="m" style="left:452.5px;top:210px;color:#000;">5</div>
<div class="m" style="left:466.875px;top:210px;color:#000;">N</div>
<div class="m" style="left:481.25px;top:210px;color:#000;">o</div>
<div class="m" style="left:488.4375px;top:210px;color:#000;">v</div>
<div class="m" style="left:502.8125px;top:210px;color:#000;">2</div>
<div class="m" style="left:510.0px;top:210px;color:#000;">0</div>
<div class="m" style="left:517.1875px;top:210px;color:#000;">2</div>
<div class="m" style="left:524.375px;top:210px;color:#000;">4</div>
<div class="m" style="left:7.2999999999999545px;top:224px;color:#a5a5a5;">0100</div>
<div class="m" style="left:50.0px;top:224px;color:#000;">31 36 3a 35 37 3a 35 31  20 47 4d 54 0d 0a 45 54</div>
<div class="m" style="left:416.5625px;top:224px;color:#000;">1</div>
<div class="m" style="left:423.75px;top:224px;color:#000;">6</div>
<div class="m" style="left:430.9375px;top:224px;color:#000;">:</div>
<div class="m" style="left:438.125px;top:224px;color:#000;">5</div>
<div class="m" style="left:445.3125px;top:224px;color:#000;">7</div>
<div class="m" style="left:452.5px;top:224px;color:#000;">:</div>
<div class="m" style="left:459.6875px;top:224px;color:#000;">5</div>
<div class="m" style="left:466.875px;top:224px;color:#000;">1</div>
<div class="m" style="left:488.4375px;top:224px;color:#000;">G</div>
<div class="m" style="left:495.625px;top:224px;color:#000;">M</div>
<div class="m" style="left:502.8125px;top:224px;color:#000;">T</div>
<div class="m" style="left:510.0px;top:224px;color:#a0a0a0;">·</div>
<div class="m" style="left:517.1875px;top:224px;color:#a0a0a0;">·</div>
<div class="m" style="left:524.375px;top:224px;color:#000;">E</div>
<div class="m" style="left:531.5625px;top:224px;color:#000;">T</div>
<div class="m" style="left:7.2999999999999545px;top:238px;color:#a5a5a5;">0110</div>
<div class="m" style="left:50.0px;top:238px;color:#000;">61 67 3a 20 22 36 37 32  61 34 65 38 66 2d 33 31</div>
<div class="m" style="left:416.5625px;top:238px;color:#000;">a</div>
<div class="m" style="left:423.75px;top:238px;color:#000;">g</div>
<div class="m" style="left:430.9375px;top:238px;color:#000;">:</div>
<div class="m" style="left:445.3125px;top:238px;color:#000;">"</div>
<div class="m" style="left:452.5px;top:238px;color:#000;">6</div>
<div class="m" style="left:459.6875px;top:238px;color:#000;">7</div>
<div class="m" style="left:466.875px;top:238px;color:#000;">2</div>
<div class="m" style="left:481.25px;top:238px;color:#000;">a</div>
<div class="m" style="left:488.4375px;top:238px;color:#000;">4</div>
<div class="m" style="left:495.625px;top:238px;color:#000;">e</div>
<div class="m" style="left:502.8125px;top:238px;color:#000;">8</div>
<div class="m" style="left:510.0px;top:238px;color:#000;">f</div>
<div class="m" style="left:517.1875px;top:238px;color:#000;">-</div>
<div class="m" style="left:524.375px;top:238px;color:#000;">3</div>
<div class="m" style="left:531.5625px;top:238px;color:#000;">1</div>
<div class="m" style="left:7.2999999999999545px;top:252px;color:#a5a5a5;">0120</div>
<div class="m" style="left:50.0px;top:252px;color:#000;">62 22 0d 0a 41 63 63 65  70 74 2d 52 61 6e 67 65</div>
<div class="m" style="left:416.5625px;top:252px;color:#000;">b</div>
<div class="m" style="left:423.75px;top:252px;color:#000;">"</div>
<div class="m" style="left:430.9375px;top:252px;color:#a0a0a0;">·</div>
<div class="m" style="left:438.125px;top:252px;color:#a0a0a0;">·</div>
<div class="m" style="left:445.3125px;top:252px;color:#000;">A</div>
<div class="m" style="left:452.5px;top:252px;color:#000;">c</div>
<div class="m" style="left:459.6875px;top:252px;color:#000;">c</div>
<div class="m" style="left:466.875px;top:252px;color:#000;">e</div>
<div class="m" style="left:481.25px;top:252px;color:#000;">p</div>
<div class="m" style="left:488.4375px;top:252px;color:#000;">t</div>
<div class="m" style="left:495.625px;top:252px;color:#000;">-</div>
<div class="m" style="left:502.8125px;top:252px;color:#000;">R</div>
<div class="m" style="left:510.0px;top:252px;color:#000;">a</div>
<div class="m" style="left:517.1875px;top:252px;color:#000;">n</div>
<div class="m" style="left:524.375px;top:252px;color:#000;">g</div>
<div class="m" style="left:531.5625px;top:252px;color:#000;">e</div>
<div class="m" style="left:7.2999999999999545px;top:266px;color:#a5a5a5;">0130</div>
<div class="m" style="left:50.0px;top:266px;color:#000;">73 3a 20 62 79 74 65 73  0d 0a 0d 0a 23 21 2f 62</div>
<div class="m" style="left:416.5625px;top:266px;color:#000;">s</div>
<div class="m" style="left:423.75px;top:266px;color:#000;">:</div>
<div class="m" style="left:438.125px;top:266px;color:#000;">b</div>
<div class="m" style="left:445.3125px;top:266px;color:#000;">y</div>
<div class="m" style="left:452.5px;top:266px;color:#000;">t</div>
<div class="m" style="left:459.6875px;top:266px;color:#000;">e</div>
<div class="m" style="left:466.875px;top:266px;color:#000;">s</div>
<div class="m" style="left:481.25px;top:266px;color:#a0a0a0;">·</div>
<div class="m" style="left:488.4375px;top:266px;color:#a0a0a0;">·</div>
<div class="m" style="left:495.625px;top:266px;color:#a0a0a0;">·</div>
<div class="m" style="left:502.8125px;top:266px;color:#a0a0a0;">·</div>
<div class="m" style="left:510.0px;top:266px;color:#000;">#</div>
<div class="m" style="left:517.1875px;top:266px;color:#000;">!</div>
<div class="m" style="left:524.375px;top:266px;color:#000;">/</div>
<div class="m" style="left:531.5625px;top:266px;color:#000;">b</div>
</div>
<div style="left:1351px;top:402px;width:14px;height:279px;background:#e3e3e3;border-left:1px solid #c6c6c6;box-sizing:border-box"></div>
<div style="left:1352px;top:402px;width:13px;height:14px;background:linear-gradient(90deg,#ffffff,#f1f1f1)"></div>
<div style="left:1352px;top:416px;width:13px;height:1px;background:#c6c6c6"></div>
<div style="left:1352px;top:417px;width:13px;height:40px;background:linear-gradient(90deg,#ffffff,#f0f0f0)"></div>
<div style="left:1352px;top:457px;width:13px;height:1px;background:#c6c6c6"></div>
<div style="left:1352px;top:667px;width:13px;height:1px;background:#c6c6c6"></div>
<div style="left:1352px;top:668px;width:13px;height:13px;background:linear-gradient(90deg,#ffffff,#f1f1f1)"></div>
<svg style="position:absolute;left:0;top:0" width="1366" height="704" viewBox="0 0 1366 704"><path d="M1354.5,411 L1362.5,411 L1358.5,407 Z" fill="#444"/><path d="M1354.5,672 L1362.5,672 L1358.5,676 Z" fill="#444"/></svg>
<div style="left:0px;top:682px;width:1366px;height:22px;background:#efefef"></div>
<svg style="position:absolute;left:0;top:0" width="1366" height="704" viewBox="0 0 1366 704"><defs><radialGradient id="rg" cx="0.4" cy="0.35" r="0.7"><stop offset="0" stop-color="#f29a9a"/><stop offset="1" stop-color="#dc4a4a"/></radialGradient></defs><circle cx="17" cy="693" r="6.6" fill="url(#rg)" stroke="#7a3030" stroke-width="0.9"/><rect x="33.7" y="686.5" width="10.8" height="13" fill="#f3f3ec" stroke="#cfcfc6" stroke-width="1"/><rect x="33.7" y="686.2" width="8.3" height="3.6" fill="#3d9be0"/><path d="M36.5,689.5 L37.5,687 L38.5,689.5 Z" fill="#fff"/><path d="M35,692.5 H42 M35,695 H41 M35,697.5 H42" stroke="#c6c6c0" stroke-width="0.8"/><path d="M37.8,695.4 L45.8,687.4" stroke="#3a3a3a" stroke-width="2.7" stroke-linecap="round"/><path d="M37,696.2 L38.3,694.6" stroke="#111" stroke-width="1.5"/><rect x="888" y="686" width="1" height="1" fill="#b0b0b0"/><rect x="888" y="688" width="1" height="1" fill="#b0b0b0"/><rect x="888" y="690" width="1" height="1" fill="#b0b0b0"/><rect x="888" y="692" width="1" height="1" fill="#b0b0b0"/><rect x="888" y="694" width="1" height="1" fill="#b0b0b0"/><rect x="888" y="696" width="1" height="1" fill="#b0b0b0"/><rect x="888" y="698" width="1" height="1" fill="#b0b0b0"/><rect x="888" y="700" width="1" height="1" fill="#b0b0b0"/><rect x="1259" y="686" width="1" height="1" fill="#b0b0b0"/><rect x="1259" y="688" width="1" height="1" fill="#b0b0b0"/><rect x="1259" y="690" width="1" height="1" fill="#b0b0b0"/><rect x="1259" y="692" width="1" height="1" fill="#b0b0b0"/><rect x="1259" y="694" width="1" height="1" fill="#b0b0b0"/><rect x="1259" y="696" width="1" height="1" fill="#b0b0b0"/><rect x="1259" y="698" width="1" height="1" fill="#b0b0b0"/><rect x="1259" y="700" width="1" height="1" fill="#b0b0b0"/></svg>
<div class="t" style="left:63px;top:686px;font-size:12.5px;color:#000;transform:scaleX(1.0744);">Hypertext Transfer Protocol: Protocol</div>
<div class="t" style="left:899.5px;top:686px;font-size:12.5px;color:#000;transform:scaleX(1.0728);">Packets: 2019 · Displayed: 48 (2.4%)</div>
<div class="t" style="left:1271.5px;top:686px;font-size:12.5px;color:#000;transform:scaleX(1.0858);">Profile: Default</div>
<div style="left:6px;top:47px;width:341px;height:401px;background:#fff;border:1px solid #a0a0a0;box-sizing:border-box;box-shadow:2px 3px 14px rgba(0,0,0,0.38)"></div>
<div style="left:6px;top:375px;width:341px;height:23px;background:#308cc6"></div>
<div style="left:6px;top:375px;width:341px;height:1px;background:#2b7db8"></div>
<div style="left:6px;top:397px;width:341px;height:1px;background:#2b7db8"></div>
<div style="left:11px;top:162px;width:331px;height:1px;background:#c8c8c8"></div>
<div style="left:11px;top:210px;width:331px;height:1px;background:#c8c8c8"></div>
<div style="left:11px;top:235px;width:331px;height:1px;background:#c8c8c8"></div>
<div style="left:11px;top:398px;width:331px;height:1px;background:#c8c8c8"></div>
<div style="left:11px;top:423px;width:331px;height:1px;background:#c8c8c8"></div>
<div class="t" style="left:33.5px;top:51px;font-size:12.5px;color:#000000;transform:scaleX(1.0482);"><u>O</u>pen</div>
<div class="t" style="left:254.5px;top:51px;font-size:12.5px;color:#000000;transform:scaleX(1.1204);">Ctrl+O</div>
<div class="t" style="left:33.5px;top:74px;font-size:12.5px;color:#000000;transform:scaleX(1.0500);">Open <u>R</u>ecent</div>
<div class="t" style="left:33.5px;top:97px;font-size:12.5px;color:#000000;transform:scaleX(1.0665);"><u>M</u>erge...</div>
<div class="t" style="left:33.5px;top:120px;font-size:12.5px;color:#000000;transform:scaleX(1.0968);"><u>I</u>mport from Hex Dump...</div>
<div class="t" style="left:33.5px;top:143px;font-size:12.5px;color:#000000;transform:scaleX(1.0230);"><u>C</u>lose</div>
<div class="t" style="left:254.5px;top:143px;font-size:12.5px;color:#000000;transform:scaleX(1.1229);">Ctrl+W</div>
<div class="t" style="left:33.5px;top:168px;font-size:12.5px;color:#b4b4b4;transform:scaleX(1.0338);"><u>S</u>ave</div>
<div class="t" style="left:254.5px;top:168px;font-size:12.5px;color:#b4b4b4;transform:scaleX(1.1125);">Ctrl+S</div>
<div class="t" style="left:33.5px;top:191px;font-size:12.5px;color:#000000;transform:scaleX(1.0513);">Save <u>A</u>s...</div>
<div class="t" style="left:254.5px;top:191px;font-size:12.5px;color:#000000;transform:scaleX(1.1330);">Ctrl+Shift+S</div>
<div class="t" style="left:33.5px;top:216px;font-size:12.5px;color:#000000;transform:scaleX(1.0289);">File Set</div>
<div class="t" style="left:33.5px;top:241px;font-size:12.5px;color:#000000;transform:scaleX(1.0642);">Export Specified Packets...</div>
<div class="t" style="left:33.5px;top:264px;font-size:12.5px;color:#000000;transform:scaleX(1.0638);">Export Packet Dissections</div>
<div class="t" style="left:33.5px;top:287px;font-size:12.5px;color:#b4b4b4;transform:scaleX(1.0676);">Export Packet <u>B</u>ytes...</div>
<div class="t" style="left:254.5px;top:287px;font-size:12.5px;color:#b4b4b4;transform:scaleX(1.1420);">Ctrl+Shift+X</div>
<div class="t" style="left:33.5px;top:310px;font-size:12.5px;color:#000000;transform:scaleX(1.0469);">Export PDUs to File...</div>
<div class="t" style="left:33.5px;top:333px;font-size:12.5px;color:#000000;transform:scaleX(1.0756);">Strip Headers...</div>
<div class="t" style="left:33.5px;top:356px;font-size:12.5px;color:#000000;transform:scaleX(1.0373);">Export TLS Session Keys...</div>
<div class="t" style="left:33.5px;top:379px;font-size:12.5px;color:#ffffff;transform:scaleX(1.0787);">Export Objects</div>
<div class="t" style="left:33.5px;top:404px;font-size:12.5px;color:#000000;transform:scaleX(1.0809);"><u>P</u>rint...</div>
<div class="t" style="left:254.5px;top:404px;font-size:12.5px;color:#000000;transform:scaleX(1.1016);">Ctrl+P</div>
<div class="t" style="left:33.5px;top:429px;font-size:12.5px;color:#000000;transform:scaleX(1.0945);"><u>Q</u>uit</div>
<div class="t" style="left:254.5px;top:429px;font-size:12.5px;color:#000000;transform:scaleX(1.1204);">Ctrl+Q</div>
<svg style="position:absolute;left:0;top:0" width="1366" height="704" viewBox="0 0 1366 704"><path d="M337.6,78.0 L341.5,81.5 L337.6,85.0 Z" fill="#555"/><path d="M337.6,220.0 L341.5,223.5 L337.6,227.0 Z" fill="#555"/><path d="M337.6,268.0 L341.5,271.5 L337.6,275.0 Z" fill="#555"/><path d="M337.6,383.0 L341.5,386.5 L337.6,390.0 Z" fill="#e8f0f8"/></svg>
<div style="left:346px;top:375px;width:130px;height:138px;background:#fff;border:1px solid #a0a0a0;box-sizing:border-box;box-shadow:2px 3px 14px rgba(0,0,0,0.38)"></div>
<div style="left:346px;top:421px;width:130px;height:23px;background:#308cc6"></div>
<div style="left:346px;top:421px;width:130px;height:1px;background:#2b7db8"></div>
<div style="left:346px;top:443px;width:130px;height:1px;background:#2b7db8"></div>
<div class="t" style="left:373.5px;top:379px;font-size:12.5px;color:#000000;transform:scaleX(1.0061);">DICOM...</div>
<div class="t" style="left:373.5px;top:402px;font-size:12.5px;color:#000000;transform:scaleX(0.9684);">FTP-DATA...</div>
<div class="t" style="left:373.5px;top:425px;font-size:12.5px;color:#ffffff;transform:scaleX(0.9720);">HTTP...</div>
<div class="t" style="left:373.5px;top:448px;font-size:12.5px;color:#000000;transform:scaleX(0.9919);">IMF...</div>
<div class="t" style="left:373.5px;top:471px;font-size:12.5px;color:#000000;transform:scaleX(1.0036);">SMB...</div>
<div class="t" style="left:373.5px;top:494px;font-size:12.5px;color:#000000;transform:scaleX(0.9528);">TFTP...</div>
<svg style="position:absolute;left:0;top:0" width="1366" height="704" viewBox="0 0 1366 704"><path d="M435.6,428.6 L447.3,440.4 L444.5,443.3 L444.4,447.8 L442.8,448 L435.6,444.9 Z" fill="#4a4a4a" stroke="#f8f8f8" stroke-width="1.3" stroke-linejoin="round"/></svg>
</div></body></html>
